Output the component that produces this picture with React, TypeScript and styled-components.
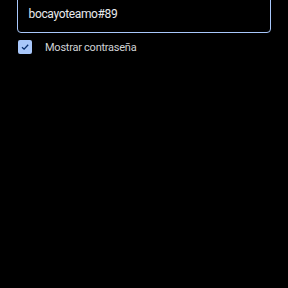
import styled, { createGlobalStyle } from "styled-components";

const GlobalStyle = createGlobalStyle`
  html, body {
    margin: 0;
    padding: 0;
    background: #000;
    font-family: Roboto, "Noto Sans", sans-serif;
  }
`;

const Page = styled.div`
  width: 288px;
  height: 288px;
  overflow: hidden;
  background: #000;
  display: flex;
  flex-direction: column;
  padding: 0 17px;
  box-sizing: border-box;
`;

const Field = styled.div`
  margin-top: -6px;
  height: 39px;
  box-sizing: border-box;
  border: 1.5px solid #a8c7fa;
  border-radius: 4px;
  display: flex;
  align-items: center;
  padding: 1px 10px 0 10.5px;
  color: #e8eaed;
  font-size: 12px;
  letter-spacing: -0.35px;
`;

const CheckRow = styled.label`
  display: flex;
  align-items: center;
  gap: 13px;
  margin-top: 7px;
  padding-left: 1px;
  color: #d0d3d6;
  font-size: 11px;
  letter-spacing: -0.25px;
`;

const Box = styled.span`
  width: 14px;
  height: 14px;
  border-radius: 2px;
  background: #a8c7fa;
  display: flex;
  align-items: center;
  justify-content: center;
`;

export default function App() {
  return (
    <>
      <GlobalStyle />
      <Page>
        <Field>bocayoteamo#89</Field>
        <CheckRow>
          <Box>
            <svg width="10" height="10" viewBox="0 0 10 10">
              <path d="M2 5.2 L4.1 7.2 L8.2 2.8" fill="none" stroke="#062e6f" strokeWidth="1.3" />
            </svg>
          </Box>
          Mostrar contraseña
        </CheckRow>
      </Page>
    </>
  );
}
